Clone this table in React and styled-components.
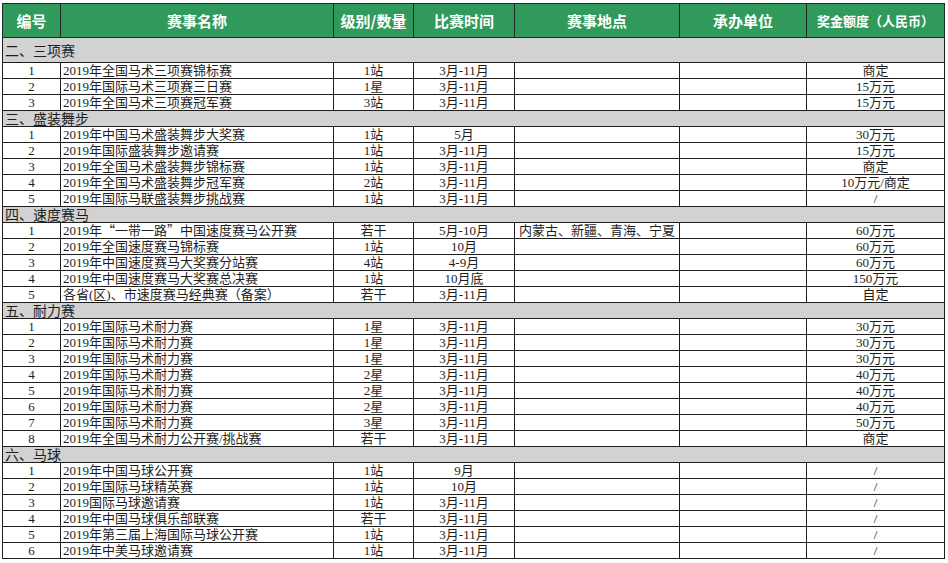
import React from "react"
import styled, { createGlobalStyle } from "styled-components"

const GlobalStyle = createGlobalStyle`
  html, body {
    margin: 0;
    padding: 0;
    background: #ffffff;
  }
  body {
    font-family: "Liberation Serif", "Noto Sans CJK SC", serif;
    color: #1e1e1e;
  }
`

const Sheet = styled.table`
  border-collapse: collapse;
  table-layout: fixed;
  width: 942px;
  margin: 3px 0 0 2px;
`

const HeadRow = styled.tr`
  height: 34px;
  background: #2f9a5c;
`

const HeadCell = styled.th`
  border: 1px solid #1f2a22;
  color: #ffffff;
  font-family: "Noto Sans CJK SC", sans-serif;
  font-weight: 700;
  font-size: ${p => (p.$small ? "13px" : "15px")};
  text-align: center;
  padding: 0;
  white-space: nowrap;
`

const SectionRow = styled.tr`
  height: ${p => (p.$first ? "25px" : "16px")};
  background: #d2d2d2;
`

const SectionCell = styled.td`
  border: 1px solid #1e1e1e;
  font-family: "Noto Sans CJK SC", sans-serif;
  font-size: 14px;
  line-height: 15px;
  padding: 0 0 0 2px;
  text-align: left;
  white-space: nowrap;
`

const DataRow = styled.tr`
  height: 16px;
  background: #ffffff;
`

const Cell = styled.td`
  border: 1px solid #1e1e1e;
  font-size: 13px;
  line-height: 14px;
  padding: ${p => (p.$left ? "0 0 0 2px" : "0")};
  text-align: ${p => (p.$left ? "left" : "center")};
  white-space: nowrap;
`

const Wide = styled.span`
  font-family: "Noto Sans CJK SC", sans-serif;
  line-height: 12px;
`

const widths = [58, 273, 80, 101, 165, 127, 138]

const sections = [
  {
    title: "二、三项赛",
    rows: [
      ["2019年全国马术三项赛锦标赛", "1站", "3月-11月", "", "商定"],
      ["2019年国际马术三项赛三日赛", "1星", "3月-11月", "", "15万元"],
      ["2019年全国马术三项赛冠军赛", "3站", "3月-11月", "", "15万元"],
    ],
  },
  {
    title: "三、盛装舞步",
    rows: [
      ["2019年中国马术盛装舞步大奖赛", "1站", "5月", "", "30万元"],
      ["2019年国际盛装舞步邀请赛", "1站", "3月-11月", "", "15万元"],
      ["2019年全国马术盛装舞步锦标赛", "1站", "3月-11月", "", "商定"],
      ["2019年全国马术盛装舞步冠军赛", "2站", "3月-11月", "", "10万元/商定"],
      ["2019年国际马联盛装舞步挑战赛", "1站", "3月-11月", "", "/"],
    ],
  },
  {
    title: "四、速度赛马",
    rows: [
      [
        <>2019年<Wide>“</Wide>一带一路<Wide>”</Wide>中国速度赛马公开赛</>,
        "若干", "5月-10月", "内蒙古、新疆、青海、宁夏", "60万元",
      ],
      ["2019年全国速度赛马锦标赛", "1站", "10月", "", "60万元"],
      ["2019年中国速度赛马大奖赛分站赛", "4站", "4-9月", "", "60万元"],
      ["2019年中国速度赛马大奖赛总决赛", "1站", "10月底", "", "150万元"],
      ["各省(区)、市速度赛马经典赛（备案）", "若干", "3月-11月", "", "自定"],
    ],
  },
  {
    title: "五、耐力赛",
    rows: [
      ["2019年国际马术耐力赛", "1星", "3月-11月", "", "30万元"],
      ["2019年国际马术耐力赛", "1星", "3月-11月", "", "30万元"],
      ["2019年国际马术耐力赛", "1星", "3月-11月", "", "30万元"],
      ["2019年国际马术耐力赛", "2星", "3月-11月", "", "40万元"],
      ["2019年国际马术耐力赛", "2星", "3月-11月", "", "40万元"],
      ["2019年国际马术耐力赛", "2星", "3月-11月", "", "40万元"],
      ["2019年国际马术耐力赛", "3星", "3月-11月", "", "50万元"],
      ["2019年全国马术耐力公开赛/挑战赛", "若干", "3月-11月", "", "商定"],
    ],
  },
  {
    title: "六、马球",
    rows: [
      ["2019年中国马球公开赛", "1站", "9月", "", "/"],
      ["2019年国际马球精英赛", "1站", "10月", "", "/"],
      ["2019国际马球邀请赛", "1站", "3月-11月", "", "/"],
      ["2019年中国马球俱乐部联赛", "若干", "3月-11月", "", "/"],
      ["2019年第三届上海国际马球公开赛", "1站", "3月-11月", "", "/"],
      ["2019年中美马球邀请赛", "1站", "3月-11月", "", "/"],
    ],
  },
]

function App() {
  return (
    <>
      <GlobalStyle />
      <Sheet>
        <colgroup>
          {widths.map((w, i) => (
            <col key={i} style={{ width: w }} />
          ))}
        </colgroup>
        <thead>
          <HeadRow>
            <HeadCell>编号</HeadCell>
            <HeadCell>赛事名称</HeadCell>
            <HeadCell>级别/数量</HeadCell>
            <HeadCell>比赛时间</HeadCell>
            <HeadCell>赛事地点</HeadCell>
            <HeadCell>承办单位</HeadCell>
            <HeadCell $small>奖金额度（人民币）</HeadCell>
          </HeadRow>
        </thead>
        <tbody>
          {sections.map((sec, si) => (
            <React.Fragment key={sec.title}>
              <SectionRow $first={si === 0}>
                <SectionCell colSpan={7}>{sec.title}</SectionCell>
              </SectionRow>
              {sec.rows.map((r, ri) => (
                <DataRow key={ri}>
                  <Cell>{ri + 1}</Cell>
                  <Cell $left>{r[0]}</Cell>
                  <Cell>{r[1]}</Cell>
                  <Cell>{r[2]}</Cell>
                  <Cell>{r[3]}</Cell>
                  <Cell></Cell>
                  <Cell>{r[4]}</Cell>
                </DataRow>
              ))}
            </React.Fragment>
          ))}
        </tbody>
      </Sheet>
    </>
  )
}

export default App
